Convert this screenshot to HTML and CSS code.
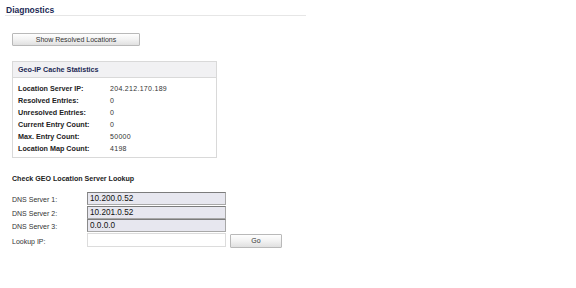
FILE: index.html
```html
<!DOCTYPE html>
<html>
<head>
<meta charset="utf-8">
<link rel="stylesheet" href="styles.css">
</head>
<body>
<div class="page">
  <h1 class="title">Diagnostics</h1>
  <div class="actions">
    <button class="btn btn-wide" type="button">Show Resolved Locations</button>
  </div>
  <div class="stats">
    <div class="stats-head">Geo-IP Cache Statistics</div>
    <div class="stats-body">
      <div class="stat-label">Location Server IP:</div><div class="stat-value">204.212.170.189</div>
      <div class="stat-label">Resolved Entries:</div><div class="stat-value">0</div>
      <div class="stat-label">Unresolved Entries:</div><div class="stat-value">0</div>
      <div class="stat-label">Current Entry Count:</div><div class="stat-value">0</div>
      <div class="stat-label">Max. Entry Count:</div><div class="stat-value">50000</div>
      <div class="stat-label">Location Map Count:</div><div class="stat-value">4198</div>
    </div>
  </div>
  <h2 class="sub">Check GEO Location Server Lookup</h2>
  <div class="lookup">
    <label class="f-label">DNS Server 1:</label><input class="field field-ro" value="10.200.0.52" readonly><span></span>
    <label class="f-label">DNS Server 2:</label><input class="field field-ro" value="10.201.0.52" readonly><span></span>
    <label class="f-label">DNS Server 3:</label><input class="field field-ro" value="0.0.0.0" readonly><span></span>
    <label class="f-label">Lookup IP:</label><input class="field field-edit" value=""><button class="btn btn-go" type="button">Go</button>
  </div>
</div>
</body>
</html>
```

FILE: styles.css
```css
html, body {
  margin: 0;
  padding: 0;
  background: #ffffff;
}
body {
  font-family: "Liberation Sans", Arial, sans-serif;
  color: #222;
}
.page {
  width: 576px;
  height: 288px;
  overflow: hidden;
}
.title {
  margin: 0 0 0 5px;
  width: 300px;
  padding: 5px 0 0 1px;
  height: 10px;
  line-height: 10px;
  font-size: 8.5px;
  font-weight: bold;
  color: #1c2a55;
  border-bottom: 1px solid #e6e6e6;
}
.actions {
  margin: 17px 0 0 12px;
  height: 13px;
}
.btn {
  font-family: "Liberation Sans", Arial, sans-serif;
  font-size: 7px;
  color: #333;
  background: linear-gradient(#fefefe, #f2f2f2 50%, #e0e0e0);
  border: 1px solid #b9b9b9;
  border-radius: 1px;
  padding: 0;
  margin: 0;
  display: block;
}
.btn-wide {
  width: 128px;
  height: 13px;
  line-height: 11px;
}
.stats {
  margin: 15px 0 0 12px;
  width: 203px;
  border: 1px solid #d9d9d9;
}
.stats-head {
  height: 15px;
  line-height: 15px;
  padding-left: 5px;
  background: #f1f1f3;
  border-bottom: 1px solid #d9d9d9;
  font-size: 7.2px;
  font-weight: bold;
  color: #1c2a55;
}
.stats-body {
  display: grid;
  grid-template-columns: 92px 1fr;
  grid-auto-rows: 12px;
  padding: 4px 0 3px 5px;
  align-items: center;
}
.stat-label {
  font-size: 7.2px;
  font-weight: bold;
  color: #222;
}
.stat-value {
  font-size: 7px;
  color: #333;
  letter-spacing: 0.3px;
}
.sub {
  margin: 16px 0 0 12px;
  line-height: 11px;
  height: 11px;
  font-size: 7.1px;
  font-weight: bold;
  color: #222;
}
.lookup {
  margin: 7px 0 0 12px;
  display: grid;
  grid-template-columns: 75px 139px 56px;
  grid-template-rows: 13px 13px 13px 14px;
  row-gap: 0.7px;
  align-items: center;
}
.f-label {
  font-size: 7px;
  color: #333;
  padding-top: 2px;
}
.field {
  box-sizing: border-box;
  height: 100%;
  width: 139px;
  margin: 0;
  padding: 0 0 0 2px;
  font-family: "Liberation Sans", Arial, sans-serif;
  font-size: 8.2px;
  color: #111;
  outline: none;
}
.field-ro {
  background: #e7e7ef;
  border: 1px solid #a8a8a8;
  border-top-color: #7c7c7c;
  border-left-color: #8a8a8a;
}
.field-edit {
  background: #fff;
  border: 1px solid #dcdcdc;
}
.btn-go {
  margin-left: 4px;
  width: 52px;
  height: 14px;
  line-height: 12px;
  align-self: start;
  margin-top: 1px;
}
```
